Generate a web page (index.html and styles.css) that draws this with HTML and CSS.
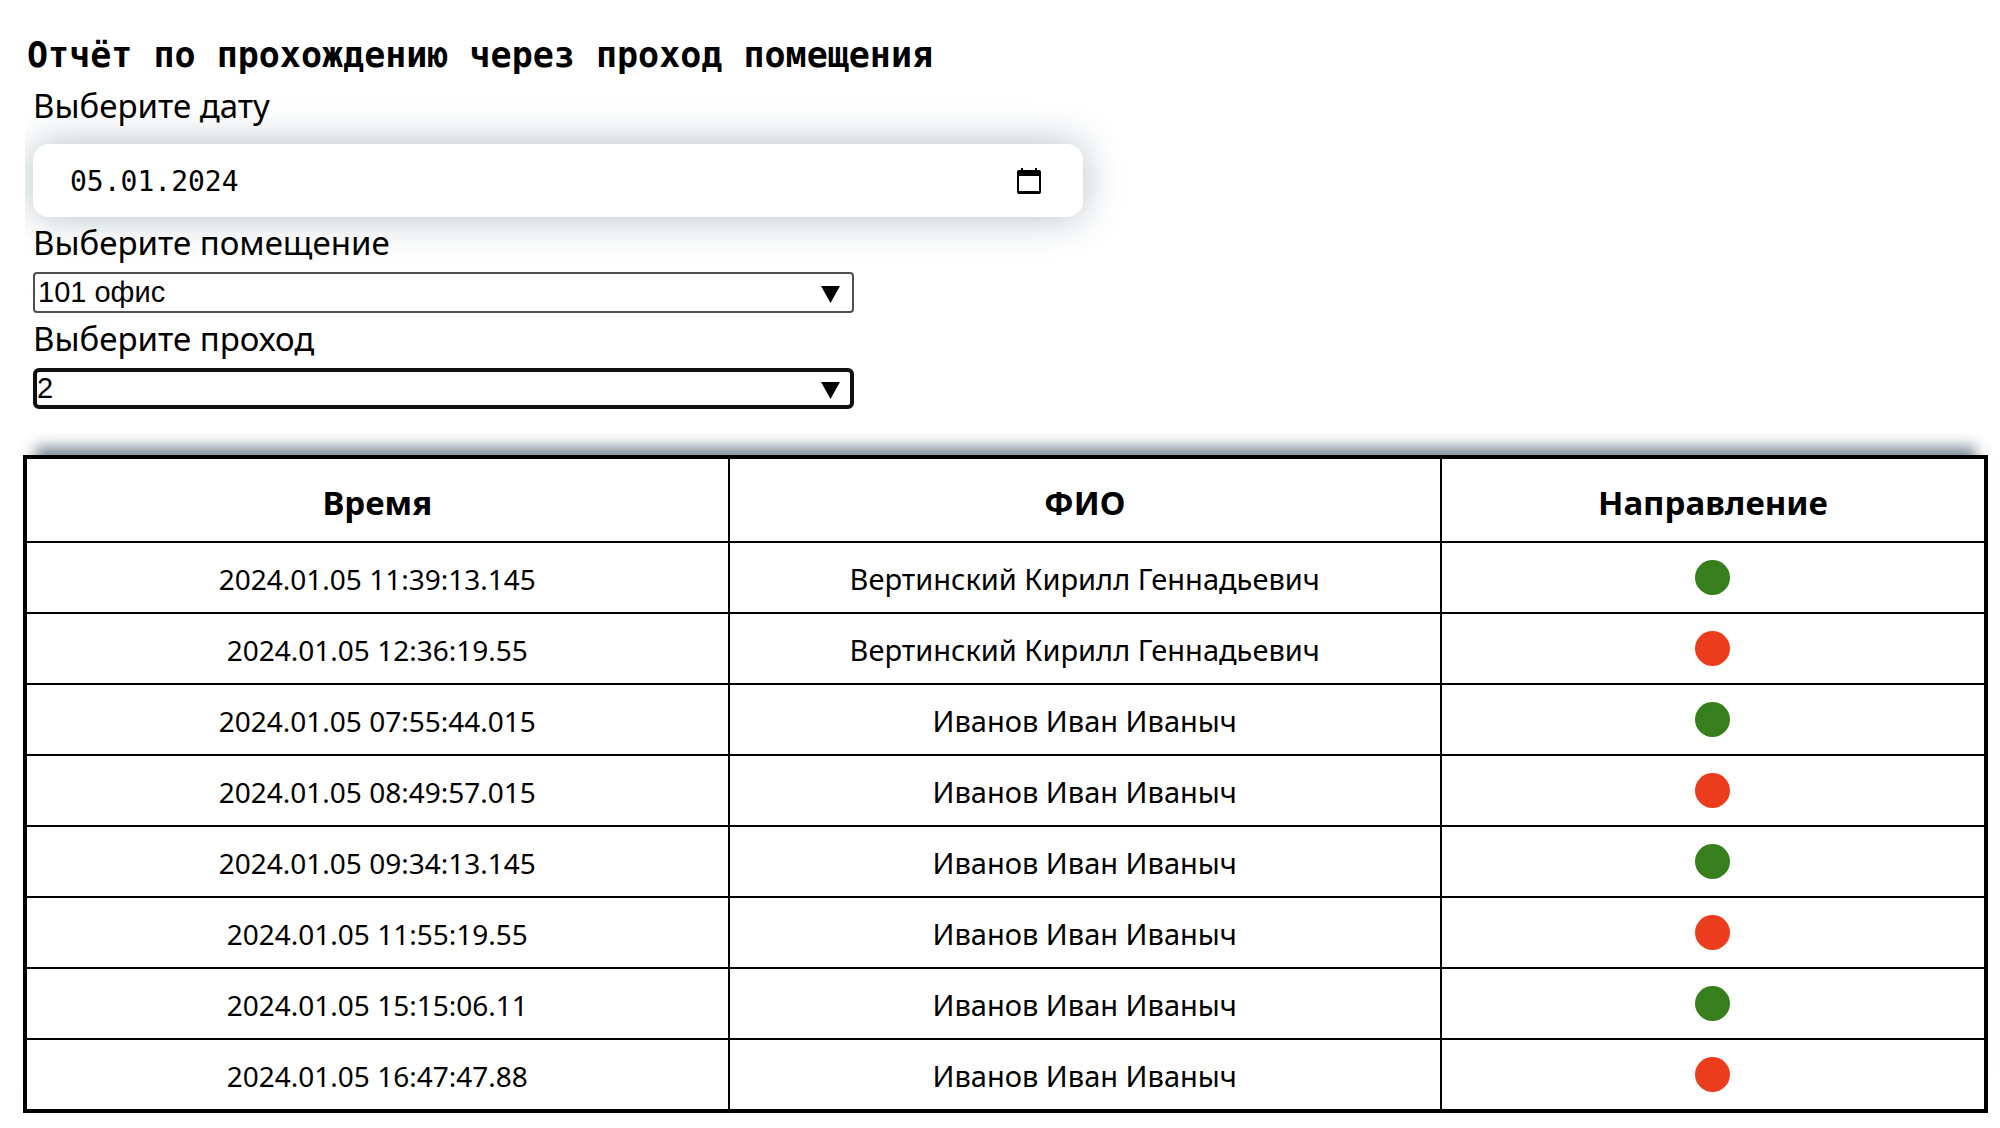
FILE: index.html
```html
<!DOCTYPE html>
<html lang="ru">
<head>
<meta charset="utf-8">
<meta name="viewport" content="width=device-width, initial-scale=1">
<title>Отчёт по прохождению</title>
<link rel="stylesheet" href="styles.css">
</head>
<body>
<main class="page">
  <form class="filters">
    <h1 class="title">Отчёт по прохождению через проход помещения</h1>
    <label class="label label-date" for="date">Выберите дату</label>
    <div class="date-field">
      <input class="date-input" id="date" type="text" value="05.01.2024">
      <button class="date-button" type="button" aria-label="Открыть календарь">
        <svg class="date-icon" viewBox="0 0 24 26" aria-hidden="true">
          <path fill="#000" fill-rule="evenodd" d="M4 0h2v2h12V0h2v2h2a2 2 0 0 1 2 2v20a2 2 0 0 1-2 2H2a2 2 0 0 1-2-2V4a2 2 0 0 1 2-2h2zM2 8v15h20V8z"/>
        </svg>
      </button>
    </div>
    <label class="label" for="room">Выберите помещение</label>
    <div class="select-field">
      <select class="select" id="room"><option>101 офис</option></select>
      <svg class="arrow" viewBox="0 0 19 17" aria-hidden="true"><path d="M0 0h19L9.500 17z"/></svg>
    </div>
    <label class="label" for="door">Выберите проход</label>
    <div class="select-field">
      <select class="select select-active" id="door"><option>2</option></select>
      <svg class="arrow" viewBox="0 0 19 17" aria-hidden="true"><path d="M0 0h19L9.500 17z"/></svg>
    </div>
  </form>
  <table class="report">
    <colgroup><col class="col-time"><col class="col-name"><col class="col-direction"></colgroup>
    <thead>
      <tr><th scope="col">Время</th><th scope="col">ФИО</th><th scope="col">Направление</th></tr>
    </thead>
    <tbody>
      <tr><td class="time">2024.01.05 11:39:13.145</td><td>Вертинский Кирилл Геннадьевич</td><td class="direction"><span class="dot dot-in"></span></td></tr>
      <tr><td class="time">2024.01.05 12:36:19.55</td><td>Вертинский Кирилл Геннадьевич</td><td class="direction"><span class="dot dot-out"></span></td></tr>
      <tr><td class="time">2024.01.05 07:55:44.015</td><td>Иванов Иван Иваныч</td><td class="direction"><span class="dot dot-in"></span></td></tr>
      <tr><td class="time">2024.01.05 08:49:57.015</td><td>Иванов Иван Иваныч</td><td class="direction"><span class="dot dot-out"></span></td></tr>
      <tr><td class="time">2024.01.05 09:34:13.145</td><td>Иванов Иван Иваныч</td><td class="direction"><span class="dot dot-in"></span></td></tr>
      <tr><td class="time">2024.01.05 11:55:19.55</td><td>Иванов Иван Иваныч</td><td class="direction"><span class="dot dot-out"></span></td></tr>
      <tr><td class="time">2024.01.05 15:15:06.11</td><td>Иванов Иван Иваныч</td><td class="direction"><span class="dot dot-in"></span></td></tr>
      <tr><td class="time">2024.01.05 16:47:47.88</td><td>Иванов Иван Иваныч</td><td class="direction"><span class="dot dot-out"></span></td></tr>
    </tbody>
  </table>
</main>
</body>
</html>
```
FILE: styles.css
```css
* { box-sizing: border-box; }

body {
  margin: 0;
  background: #fff;
  color: #000;
  font-family: "Noto Sans", sans-serif;
}

.page { padding: 32px 12px 14px 23px; }

.filters {
  display: flex;
  flex-direction: column;
  margin-left: 2px;
  padding: 0 0 46px 8px;
  overflow: clip;
}

.title {
  margin: 0 0 2px -6px;
  font: bold 35px/46px "DejaVu Sans Mono", monospace;
}

.label {
  position: relative;
  z-index: 1;
  align-self: flex-start;
  padding: 2px 0 5px;
  font-size: 33px;
  line-height: 48px;
}

.label-date { padding-bottom: 14px; }

.date-field {
  display: flex;
  align-items: center;
  width: 53.7%;
  padding: 0 42px 0 37px;
  border-radius: 16px;
  background: #fff;
  box-shadow: 0 0 40px #b4bec6;
}

.date-input {
  flex: 1;
  min-width: 0;
  height: 73px;
  padding: 2px 0 0;
  border: 0;
  outline: 0;
  background: none;
  color: #000;
  font: 28px "DejaVu Sans Mono", monospace;
}

.date-button {
  display: flex;
  padding: 0;
  border: 0;
  background: none;
}

.date-icon { width: 24px; height: 26px; }

.select-field {
  display: grid;
  align-items: center;
  width: 42%;
}

.select {
  grid-area: 1 / 1;
  width: 100%;
  height: 41px;
  padding: 0 40px 2px 3px;
  appearance: none;
  border: 2px solid #505050;
  border-radius: 4px;
  outline: 0;
  background: #fff;
  color: #000;
  font: 29px "Liberation Sans", sans-serif;
}

.select-active {
  padding-left: 0;
  border: 4px solid #101010;
  border-radius: 6px;
}

.arrow {
  grid-area: 1 / 1;
  justify-self: end;
  width: 19px;
  height: 17px;
  margin: 4px 14px 0 0;
  pointer-events: none;
}

.report {
  width: 100%;
  border: 4px solid #000;
  border-spacing: 0;
  table-layout: fixed;
  background: #fff;
  box-shadow: 0 -20px 14px -12px #788893;
  text-align: center;
}

.col-time { width: 35.9%; }
.col-name { width: 36.4%; }
.col-direction { width: 27.7%; }

.report th, .report td {
  border: 0 solid #000;
  padding: 2px 0 0;
}

.report th:not(:last-child), .report td:not(:last-child) { border-right-width: 2px; }

.report th {
  padding-top: 4px;
  border-bottom-width: 2px;
  font-size: 33px;
}

.report td {
  height: 71px;
  border-bottom-width: 2px;
  font-size: 29px;
}

.report .time { font-size: 28px; }
.report .direction { padding-top: 0; }

.report tr:last-child td { height: 69px; border-bottom-width: 0; }
.report thead th { height: 84px; }

.dot {
  display: block;
  width: 35px;
  height: 35px;
  margin: 0 auto;
  border-radius: 50%;
}

.dot-in { background: #377f1d; }
.dot-out { background: #ec3c1e; }
```
